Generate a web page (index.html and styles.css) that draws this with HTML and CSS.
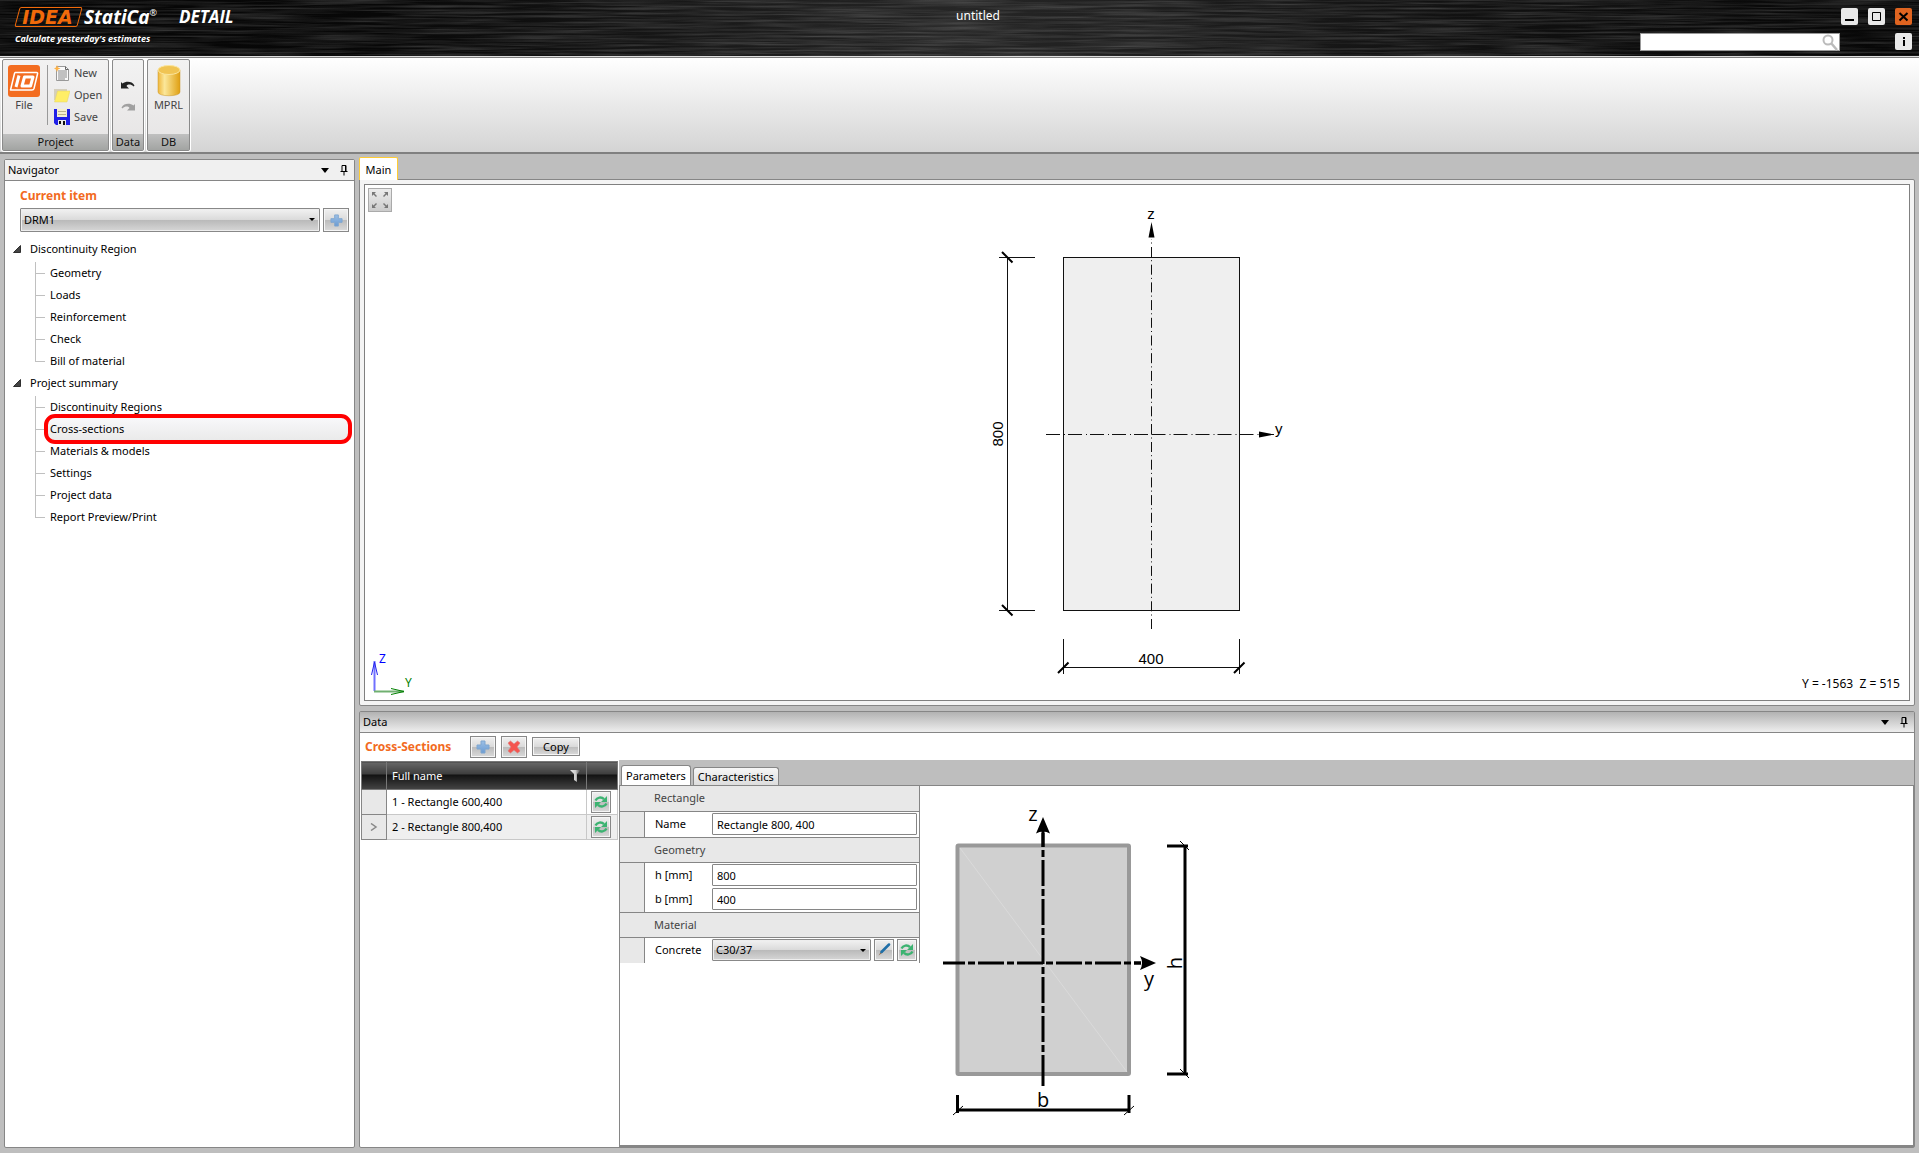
FILE: index.html
```html
<!DOCTYPE html>
<html lang="en">
<head>
<meta charset="utf-8">
<title>IDEA StatiCa Detail - untitled</title>
<link rel="stylesheet" href="styles.css">
</head>
<body>
<svg class="sprite" aria-hidden="true">
  <defs>
    <linearGradient id="gPlus" x1="0" y1="0" x2="0" y2="1"><stop offset="0" stop-color="#9cc0e6"/><stop offset="1" stop-color="#6b9bd2"/></linearGradient>
    <linearGradient id="gDb" x1="0" y1="0" x2="1" y2="0"><stop offset="0" stop-color="#efb73c"/><stop offset=".3" stop-color="#fbe79a"/><stop offset="1" stop-color="#e0a012"/></linearGradient>
    <linearGradient id="gFunnel" x1="0" y1="0" x2="1" y2="0"><stop offset="0" stop-color="#eee"/><stop offset=".5" stop-color="#ccc"/><stop offset="1" stop-color="#333"/></linearGradient>
    <symbol id="i-plus" viewBox="0 0 14 14"><path d="M5 1h4v4h4v4h-4v4h-4v-4h-4v-4h4z" fill="url(#gPlus)" stroke="#7fa6d0" stroke-width="1"/></symbol>
    <symbol id="i-delete" viewBox="0 0 14 14"><path d="M1 3l2.500-2 3.500 3 3.500-3 2.500 2-3 4 3 4-2.500 2-3.500-3-3.500 3-2.500-2 3-4z" fill="#f4554f" stroke="#dd7b78" stroke-width=".6"/></symbol>
    <symbol id="i-refresh" viewBox="0 0 14 14"><g fill="none" stroke="#3cb371" stroke-width="2.400"><path d="M1.500 5.500C3 2.200 7.500 1.600 10 4.200"/><path d="M12.500 8.500C11 11.800 6.500 12.400 4 9.800"/></g><path d="M13 1v6h-6zM1 13v-6h6z" fill="#3cb371"/></symbol>
    <symbol id="i-pin" viewBox="0 0 8 11"><path d="M2 6.500v-6h4v6M.5 6.500h7M4 6.500v4M5.500 .5v6" fill="none" stroke="#000"/></symbol>
  </defs>
</svg>

<header class="titlebar">
  <svg class="brushed" aria-hidden="true" preserveAspectRatio="none">
    <filter id="brush" x="0" y="0" width="100%" height="100%"><feTurbulence type="fractalNoise" baseFrequency="0.010 0.500" numOctaves="3" seed="4"/><feColorMatrix values="0 0 0 0 1  0 0 0 0 1  0 0 0 0 1  1.600 0 0 0 -0.550"/></filter>
    <rect width="100%" height="100%" filter="url(#brush)"/>
  </svg>
  <div class="brand">
    <div class="brand-row"><span class="logo-idea">IDEA</span><span class="logo-name">StatiCa<sup>®</sup></span><span class="logo-app">DETAIL</span></div>
    <div class="tagline">Calculate yesterday's estimates</div>
  </div>
  <div class="doc-title">untitled</div>
  <div class="window-tools">
    <div class="win-row">
      <button class="win-btn" aria-label="Minimize"><svg width="17" height="17"><path d="M4 12h9" stroke="#000" stroke-width="2"/></svg></button>
      <button class="win-btn" aria-label="Maximize"><svg width="17" height="17"><path d="M4.500 4.500h8v8h-8z" fill="none" stroke="#000"/></svg></button>
      <button class="win-btn close" aria-label="Close"><svg width="17" height="17"><path d="M4.500 5l8 7.500M12.500 5l-8 7.500" stroke="#000" stroke-width="2"/></svg></button>
    </div>
    <div class="search-row">
      <label class="search"><input type="text" aria-label="Search"><svg width="18" height="18" aria-hidden="true"><circle cx="7" cy="6" r="4.500" fill="none" stroke="#bbb" stroke-width="2"/><path d="M10 9l6 7" stroke="#bbb" stroke-width="2.500"/></svg></label>
      <button class="win-btn" aria-label="Information"><svg width="17" height="17"><path d="M8 4h2v2h-2zM8 7h2v6h-2z" fill="#000"/></svg></button>
    </div>
  </div>
</header>

<div class="ribbon">
  <section class="group group-project">
    <div class="group-body">
      <button class="big-btn"><svg width="32" height="32" aria-hidden="true"><rect width="32" height="32" rx="3" fill="#f36d21"/><g fill="none" stroke="#fff" stroke-linejoin="round"><path d="M7 7.500h21.500q1.500 0 1 1.500l-3.500 14.500q-.5 1.500-2 1.500h-21.500l4-16.500q.5-1 .5-1z" stroke-width="1.500"/><path d="M11 10.500l-3 11.500" stroke-width="3"/><path d="M16.500 12h8.500l-2.500 9h-8.500z" stroke-width="3"/></g></svg>File</button>
      <div class="file-list">
        <button class="small-btn"><svg width="16" height="16" aria-hidden="true"><path d="M2.500 1.500h9l3 3v11h-12z" fill="#fafafa" stroke="#999"/><path d="M11.500 1.500v3h3" fill="none" stroke="#666"/><path d="M4 6h9M4 8h9M4 10h9M4 12h9M4 14h7" stroke="#888"/><path d="M3 0l1 2.500 2.500 1-2.500 1-1 2.500-1-2.500-2-1 2-1z" fill="#ffb347"/></svg>New</button>
        <button class="small-btn"><svg width="16" height="16" aria-hidden="true"><path d="M0 2h13v11h-13z" fill="#d5cfbc"/><path d="M3.500 4h12.500l-3 11h-12.500z" fill="#ffee66" stroke="#e2d36a" stroke-width=".5"/></svg>Open</button>
        <button class="small-btn"><svg width="16" height="16" aria-hidden="true"><path d="M0 0h16v16h-14l-2-2z" fill="#2020e8"/><path d="M3 0h10v8h-10z" fill="#f5efcf"/><path d="M4 2.500h8M4 5.500h8" stroke="#bcb48c"/><path d="M4 11h8v5h-8z" fill="#e8e8e8"/><path d="M5 12h2v3h-2zM9 12h2v4h-2z" fill="#111"/></svg>Save</button>
      </div>
    </div>
    <h2>Project</h2>
  </section>
  <section class="group group-data">
    <div class="group-body undo-redo">
      <button class="icon-btn" aria-label="Undo"><svg width="14" height="10"><path d="M0 1l1.500 1.500C5 0 11 0 13.500 4.500l-1 1C10 3 7 3 5.500 5l2.500 2.500h-8z" fill="#222"/></svg></button>
      <button class="icon-btn" aria-label="Redo"><svg width="14" height="10"><path d="M14 1l-1.500 1.500C9 0 3 0 .5 4.500l1 1C4 3 7 3 8.500 5l-2.500 2.500h8z" fill="#a0a0a0"/></svg></button>
    </div>
    <h2>Data</h2>
  </section>
  <section class="group group-db">
    <div class="group-body">
      <button class="big-btn"><svg width="24" height="32" aria-hidden="true"><path d="M1 5v22c0 5 22 5 22 0v-22z" fill="url(#gDb)" stroke="#c9962a" stroke-width=".5"/><ellipse cx="12" cy="5" rx="11" ry="4.500" fill="#f0c453" stroke="#fbe59c"/></svg>MPRL</button>
    </div>
    <h2>DB</h2>
  </section>
</div>

<main class="workspace">
  <aside class="panel navigator">
    <div class="panel-head">
      <span>Navigator</span>
      <button class="head-btn" aria-label="Menu"><svg width="8" height="5"><path d="M0 0h8l-4 5z"/></svg></button>
      <button class="head-btn" aria-label="Pin"><svg width="8" height="11"><use href="#i-pin"/></svg></button>
    </div>
    <div class="nav-body">
      <label class="accent" for="item">Current item</label>
      <div class="item-row">
        <span class="combo"><select id="item"><option>DRM1</option></select></span>
        <button class="push" aria-label="Add item"><svg width="13" height="13"><use href="#i-plus"/></svg></button>
      </div>
    </div>
    <nav class="tree">
      <div class="tree-root"><svg width="8" height="8" aria-hidden="true"><path d="M7.500 .5v7h-7z" fill="#444" stroke="#111" stroke-width=".8"/></svg>Discontinuity Region</div>
      <ul>
        <li><a href="#">Geometry</a></li>
        <li><a href="#">Loads</a></li>
        <li><a href="#">Reinforcement</a></li>
        <li><a href="#">Check</a></li>
        <li><a href="#">Bill of material</a></li>
      </ul>
      <div class="tree-root"><svg width="8" height="8" aria-hidden="true"><path d="M7.500 .5v7h-7z" fill="#444" stroke="#111" stroke-width=".8"/></svg>Project summary</div>
      <ul>
        <li><a href="#">Discontinuity Regions</a></li>
        <li><a href="#" class="selected">Cross-sections</a></li>
        <li><a href="#">Materials &amp; models</a></li>
        <li><a href="#">Settings</a></li>
        <li><a href="#">Project data</a></li>
        <li><a href="#">Report Preview/Print</a></li>
      </ul>
    </nav>
  </aside>

  <div class="content">
    <section class="view">
      <button class="view-tab">Main</button>
      <div class="view-frame">
        <div class="canvas">
          <button class="fit" aria-label="Zoom to fit"><svg width="16" height="16"><g fill="#777"><path d="M0 0h4l-1.500 1.500 2.500 2.500-1 1-2.500-2.500-1.500 1.500z"/><path d="M16 0h-4l1.500 1.500-2.500 2.500 1 1 2.500-2.500 1.500 1.500z"/><path d="M0 16h4l-1.500-1.500 2.500-2.500-1-1-2.500 2.500-1.500-1.500z"/><path d="M16 16h-4l1.500-1.500-2.500-2.500 1-1 2.500 2.500 1.500-1.500z"/></g></svg></button>
          <svg class="drawing" width="295" height="476" role="img" aria-label="Cross-section drawing">
            <rect x="73.500" y="52.500" width="176" height="353" fill="#efefef" stroke="#111"/>
            <g stroke="#111" fill="none">
              <path d="M161.500 229V34M161.500 424V229" stroke-dasharray="10 3.500 1 3.200"/>
              <path d="M161.500 229.500H284M56 229.500H161.500" stroke-dasharray="14 4 1 3"/>
              <path d="M17.500 52.500v353M9 52.500h36M9 405.500h36M73.500 434v35M249.500 434v35M73.500 462.500h176"/>
              <path d="M12 47l10.500 10.500M12 400l10.500 10.500M68 468l10.500-10.500M244 468l10.500-10.500" stroke-width="2" stroke="#000"/>
            </g>
            <path d="M161.500 17l3 15.500h-6zM284 229.500l-15 3v-6z"/>
            <text class="fig-text" x="161" y="14" text-anchor="middle">z</text>
            <text class="fig-text" x="285" y="229">y</text>
            <text class="fig-text" x="161" y="459" text-anchor="middle">400</text>
            <text class="fig-text" transform="translate(13 229) rotate(-90)" text-anchor="middle">800</text>
          </svg>
          <svg class="triad" width="50" height="50" viewBox="0 -6 50 50" role="img" aria-label="Axes">
            <path d="M4.500 39V9" stroke="#7070ff" stroke-width="2"/><path d="M1.500 23l3-13 3 13" fill="none" stroke="#2222ee"/>
            <path d="M4 39.500h30" stroke="#70b070" stroke-width="2"/><path d="M21 36.500l13 3-13 3" fill="none" stroke="#008000"/>
            <text x="9" y="11" fill="#0000ff">Z</text><text x="35" y="35" fill="#008000">Y</text>
          </svg>
          <div class="coords">Y = -1563&nbsp; Z = 515</div>
        </div>
      </div>
    </section>

    <section class="panel data">
      <div class="panel-head shaded">
        <span>Data</span>
        <button class="head-btn" aria-label="Menu"><svg width="8" height="5"><path d="M0 0h8l-4 5z"/></svg></button>
        <button class="head-btn" aria-label="Pin"><svg width="8" height="11"><use href="#i-pin"/></svg></button>
      </div>
      <div class="data-tools">
        <h2 class="accent">Cross-Sections</h2>
        <button class="push" aria-label="Add"><svg width="14" height="14"><use href="#i-plus"/></svg></button>
        <button class="push" aria-label="Delete"><svg width="14" height="14"><use href="#i-delete"/></svg></button>
        <button class="push copy">Copy</button>
      </div>
      <div class="data-body">
        <div class="list">
          <table>
            <thead><tr><th class="c-mark"></th><th class="c-name"><div>Full name<svg width="11" height="12" aria-hidden="true"><path d="M0 0h11l-4 4v8l-3-2v-6z" fill="url(#gFunnel)"/></svg></div></th><th class="c-act"></th></tr></thead>
            <tbody>
              <tr><td class="mark"></td><td>1 - Rectangle 600,400</td><td><button class="push mini" aria-label="Replace"><svg width="14" height="14"><use href="#i-refresh"/></svg></button></td></tr>
              <tr class="current"><td class="mark"><svg width="8" height="8"><path d="M1 .5l5 3.500-5 3.500" fill="none" stroke="#888" stroke-width="1.500"/></svg></td><td>2 - Rectangle 800,400</td><td><button class="push mini" aria-label="Replace"><svg width="14" height="14"><use href="#i-refresh"/></svg></button></td></tr>
            </tbody>
          </table>
        </div>
        <div class="detail">
          <div class="tabs"><button class="tab active">Parameters</button><button class="tab">Characteristics</button></div>
          <div class="tab-page">
            <form class="props">
              <h3>Rectangle</h3>
              <div class="prop-rows">
                <div class="prop"><label for="name">Name</label><input id="name" type="text" value="Rectangle 800, 400"></div>
              </div>
              <h3>Geometry</h3>
              <div class="prop-rows">
                <div class="prop"><label for="h">h [mm]</label><input id="h" type="text" value="800"></div>
                <div class="prop"><label for="b">b [mm]</label><input id="b" type="text" value="400"></div>
              </div>
              <h3>Material</h3>
              <div class="prop-rows">
                <div class="prop"><label for="concrete">Concrete</label><span class="combo"><select id="concrete"><option>C30/37</option></select></span><button type="button" class="push mini" aria-label="Edit"><svg width="14" height="14"><path d="M1.500 12.500l3-4.500 1.500 1.200z" fill="#8c6a4a"/><path d="M4.500 9L12 1.500" stroke="#1f6fa8" stroke-width="2.500" stroke-linecap="round"/></svg></button><button type="button" class="push mini" aria-label="Replace"><svg width="14" height="14"><use href="#i-refresh"/></svg></button></div>
              </div>
            </form>
            <svg class="shape" width="260" height="328" viewBox="0 -8 260 328" role="img" aria-label="Shape parameters">
              <rect x="21.500" y="40.500" width="171.500" height="228.500" rx="1" fill="#d0d0d0" stroke="#999" stroke-width="4"/>
              <path d="M24 43l167 224" stroke="#dadada"/>
              <g stroke="#000" stroke-width="3" stroke-linecap="butt" fill="none">
                <path d="M107 281V250" /><path d="M107 247V24" stroke-dasharray="7 3 26 3"/>
                <path d="M7 158h22"/><path d="M32 158H205" stroke-dasharray="7 3 26 3"/>
                <path d="M21.500 290v18M193 290v18M21.500 305h171.500M231 41h21M231 269h21M249 41v228"/>
                <path d="M17 310l10-9M188 310l10-9M244 36l9 9M244 264l9 9" stroke-width="1"/>
              </g>
              <path d="M107 12l7 16.500q-7-4-14 0zM220 158l-16 7q4-7 0-14z"/>
              <path d="M107 28v14M205 158h-7" stroke="#000" stroke-width="3"/>
              <text x="97" y="16" text-anchor="middle">z</text>
              <text x="213" y="181" text-anchor="middle">y</text>
              <text x="107" y="302" text-anchor="middle">b</text>
              <text transform="translate(246 158) rotate(-90)" text-anchor="middle">h</text>
            </svg>
          </div>
        </div>
      </div>
    </section>
  </div>
</main>
</body>
</html>
```
FILE: styles.css
```css
* { box-sizing: border-box; }

body {
  margin: 0;
  min-height: 100vh;
  display: flex;
  flex-direction: column;
  background: #bebebe;
  color: #000;
  font: 11px/16px "Noto Sans", "Open Sans", sans-serif;
}

button, input, select { font: inherit; color: inherit; margin: 0; }
button { display: flex; align-items: center; justify-content: center; border: 0; padding: 0; background: none; }
h2, h3 { margin: 0; font: inherit; }
svg { display: block; flex: none; }
.sprite { position: absolute; width: 0; height: 0; }
.accent { color: #f26a21; font-size: 12px; font-weight: 700; }

/* Title bar */
.titlebar {
  position: relative;
  display: grid;
  grid-template-columns: 320px 1fr 283px;
  height: 58px;
  background: linear-gradient(90deg, #060606 0%, #080808 20%, #262626 50%, #121212 75%, #060606 100%);
  border-bottom: 1px solid #808080;
  box-shadow: inset 0 -1px #ddd;
  color: #fff;
}
.brushed { position: absolute; top: 0; left: 0; width: 100%; height: 56px; opacity: .2; }
.brand, .doc-title, .window-tools { position: relative; }
.brand { padding: 4px 0 0 15px; font-family: "Open Sans", sans-serif; font-style: italic; font-weight: 700; }
.brand-row { display: flex; align-items: center; height: 25px; }
.logo-idea {
  position: relative;
  width: 65px;
  color: #f26a0a;
  font: italic 700 19px/20px "DejaVu Sans", sans-serif;
  text-align: center;
}
.logo-idea::before {
  content: "";
  position: absolute;
  top: 0;
  right: 0;
  bottom: 0;
  left: 2px;
  border: 1px solid #f26a0a;
  border-radius: 2px;
  transform: skewX(-15deg);
}
.logo-name { margin-left: 4px; font-size: 19px; }
.logo-name sup { font-size: 9px; font-weight: 400; line-height: 1; vertical-align: 8px; }
.logo-app { margin-left: 22px; font-size: 17px; }
.tagline { font-size: 9px; line-height: 20px; }
.doc-title { padding-top: 8px; font-size: 12px; text-align: center; }
.window-tools { display: flex; flex-direction: column; gap: 8px; padding: 8px 7px 0 4px; }
.win-row { display: flex; justify-content: flex-end; gap: 10px; }
.search-row { display: flex; justify-content: space-between; }
.win-btn { width: 17px; height: 17px; border-radius: 2px; background: #e8e8e8; }
.win-btn.close { background: #df6420; }
.search { display: flex; width: 200px; height: 18px; background: #fff; border: 1px solid #999; }
.search input { flex: 1; min-width: 0; border: 0; padding: 0 4px; background: none; outline: 0; }

/* Ribbon */
.ribbon {
  display: flex;
  gap: 3px;
  height: 96px;
  padding: 1px 2px;
  background: linear-gradient(#fff, #d4d4d4);
  border-bottom: 2px solid #808080;
}
.group {
  display: flex;
  flex-direction: column;
  height: 92px;
  border: 1px solid #8a8a8a;
  border-radius: 2px;
  box-shadow: 0 0 0 1px #fff;
  background: linear-gradient(#f2f2f2, #e6e4e4);
  color: #444;
}
.group-project { width: 107px; }
.group-data { width: 32px; }
.group-db { width: 43px; }
.group h2 { height: 16px; background: linear-gradient(#c0c0c0, #a2a4a2); color: #111; text-align: center; }
.group-body { flex: 1; display: flex; padding: 5px; }
.group-db .group-body { justify-content: center; }
.big-btn { flex-direction: column; justify-content: flex-start; width: 32px; }
.file-list { display: flex; flex-direction: column; margin-left: 7px; padding-left: 6px; border-left: 1px solid #999; height: 60px; gap: 6px; }
.small-btn { gap: 4px; height: 16px; justify-content: flex-start; }
.undo-redo { flex-direction: column; align-items: center; justify-content: center; gap: 12px; }
.icon-btn { width: 14px; height: 10px; }

/* Workspace */
.workspace { flex: 1; display: flex; gap: 4px; padding: 3px 4px 5px; }
.panel { background: #fff; border: 1px solid #868686; border-radius: 2px; }
.panel-head {
  display: flex;
  align-items: center;
  gap: 11px;
  height: 21px;
  padding: 0 6px 0 3px;
  background: #f0f0f0;
  border-bottom: 1px solid #868686;
}
.panel-head.shaded { background: linear-gradient(#b2b2b2, #eee); }
.panel-head span { flex: 1; }
.head-btn { height: 11px; }

.push {
  width: 26px;
  height: 22px;
  flex: none;
  border: 1px solid #888;
  box-shadow: inset 0 0 0 1px #f6f6f6;
  background: linear-gradient(#f0f0f0, #dadada 50%, #bbb 50%, #dadada);
}
.push.mini { width: 20px; height: 22px; }
.combo { position: relative; display: flex; flex: 1; }
.combo select {
  appearance: none;
  width: 100%;
  height: 22px;
  padding: 0 3px;
  border: 1px solid #888;
  border-radius: 1px;
  box-shadow: inset 0 0 0 1px #eee;
  background: linear-gradient(#f2f2f2, #dadada 50%, #b9b9b9 50%, #d6d6d6);
}
.combo::after {
  content: "";
  position: absolute;
  right: 5px;
  top: 10px;
  border: solid transparent;
  border-width: 3px 3px 0;
  border-top-color: #000;
  pointer-events: none;
}

/* Navigator */
.navigator { width: 351px; margin-top: 2px; }
.nav-body { display: flex; flex-direction: column; padding: 7px 5px 6px 15px; }
.item-row { display: flex; gap: 3px; margin-top: 4px; }
.item-row select, .item-row .push { height: 24px; }
.tree-root { display: flex; align-items: center; gap: 9px; height: 22px; padding-left: 8px; }
.tree ul { list-style: none; margin: 0; padding: 2px 3px 0 30px; }
.tree li { position: relative; height: 22px; padding-left: 11px; }
.tree li::before { content: ""; position: absolute; left: 0; top: 0; height: 22px; border-left: 1px solid #c0c0c0; }
.tree li:last-child::before { height: 12px; }
.tree li::after { content: ""; position: absolute; left: 1px; top: 11px; width: 9px; border-top: 1px solid #c0c0c0; }
.tree a { position: relative; z-index: 1; display: block; padding: 3px 4px; color: #000; text-decoration: none; }
.tree a.selected { background: linear-gradient(#f8f8fa, #eaeaea); }
.tree a.selected::after {
  content: "";
  position: absolute;
  top: -4px;
  right: -1px;
  bottom: -4px;
  left: -2px;
  border: 4px solid #f00;
  border-radius: 11px;
}

/* Main view */
.content { flex: 1; min-width: 0; display: flex; flex-direction: column; gap: 5px; }
.view { flex: 1; display: flex; flex-direction: column; }
.view-tab {
  position: relative;
  z-index: 1;
  align-self: flex-start;
  width: 39px;
  height: 23px;
  margin-bottom: -1px;
  padding-top: 2px;
  background: #fff;
  border: 1px solid #ffcc33;
  border-bottom: 0;
  border-radius: 2px 2px 0 0;
}
.view-frame { flex: 1; display: flex; padding: 4px; background: #f4f4f4; border: 1px solid #868686; border-radius: 0 2px 2px 2px; }
.canvas { position: relative; flex: 1; display: flex; align-items: center; justify-content: center; background: #fff; border: 1px solid #808080; }
.fit { position: absolute; top: 3px; left: 3px; width: 24px; height: 24px; border: 1px solid #aaa; background: linear-gradient(#ececec, #ccc); }
.fig-text { font: 15px "Liberation Sans", Arial, sans-serif; }
.triad { position: absolute; left: 5px; bottom: 4px; font-size: 12px; }
.coords { position: absolute; right: 9px; bottom: 8px; font-size: 12px; }

/* Data panel */
.data { display: flex; flex-direction: column; }
.data-tools { display: flex; align-items: center; height: 27px; padding-left: 5px; }
.data-tools h2 { width: 105px; }
.data-tools .push + .push { margin-left: 5px; }
.push.copy { width: 48px; height: 19px; }
.data-body { display: flex; flex: 1; }
.list { width: 259px; padding: 1px 0 0 1px; }
table { width: 257px; table-layout: fixed; border-collapse: collapse; border: 1px solid #868686; }
th { height: 28px; padding: 0 5px; border: 1px solid #777; background: linear-gradient(#666, #3c3c3c 45%, #111 45%, #444); color: #fff; font-weight: 400; text-align: left; }
th div { display: flex; justify-content: space-between; align-items: center; }
.c-mark { width: 25px; }
.c-act { width: 31px; }
td { height: 25px; padding: 0 5px; border: 1px solid #c8c8c8; }
td:last-child { padding: 0 4px; }
.current td { background: #efefef; }
td.mark, .current td.mark { padding: 0 8px; background: #e8e8e8; border-color: #868686; }

.detail { flex: 1; min-width: 0; display: flex; flex-direction: column; }
.tabs { display: flex; align-items: flex-end; gap: 2px; height: 25px; padding-left: 2px; background: #bebebe; }
.tab { height: 18px; padding: 0 4px; border: 1px solid #868686; border-bottom: 0; border-radius: 3px 3px 0 0; background: linear-gradient(#f6f6f6, #ddd); }
.tab.active { height: 20px; background: #fff; }
.tab-page { flex: 1; display: flex; align-items: flex-start; gap: 16px; border: solid #868686; border-width: 1px 1px 2px; }
.props { width: 300px; border-right: 1px solid #868686; }
.props h3 { height: 26px; padding: 4px 0 0 34px; background: #e8e8e8; border-bottom: 1px solid #868686; color: #444; }
.prop-rows + h3 { border-top: 1px solid #868686; }
.prop-rows { padding: 0 0 1px 24px; background: linear-gradient(90deg, #e8e8e8 24px, #868686 24px, #868686 25px, #fff 25px); }
.prop { display: flex; align-items: center; gap: 3px; height: 24px; padding: 0 2px 0 11px; }
.prop label { width: 54px; }
.prop input { flex: 1; min-width: 0; height: 22px; padding: 0 4px; border: 1px solid #868686; border-radius: 1px; background: #fff; }
.shape { margin: 11px 0 20px; font: 20px "Open Sans", sans-serif; }
```
